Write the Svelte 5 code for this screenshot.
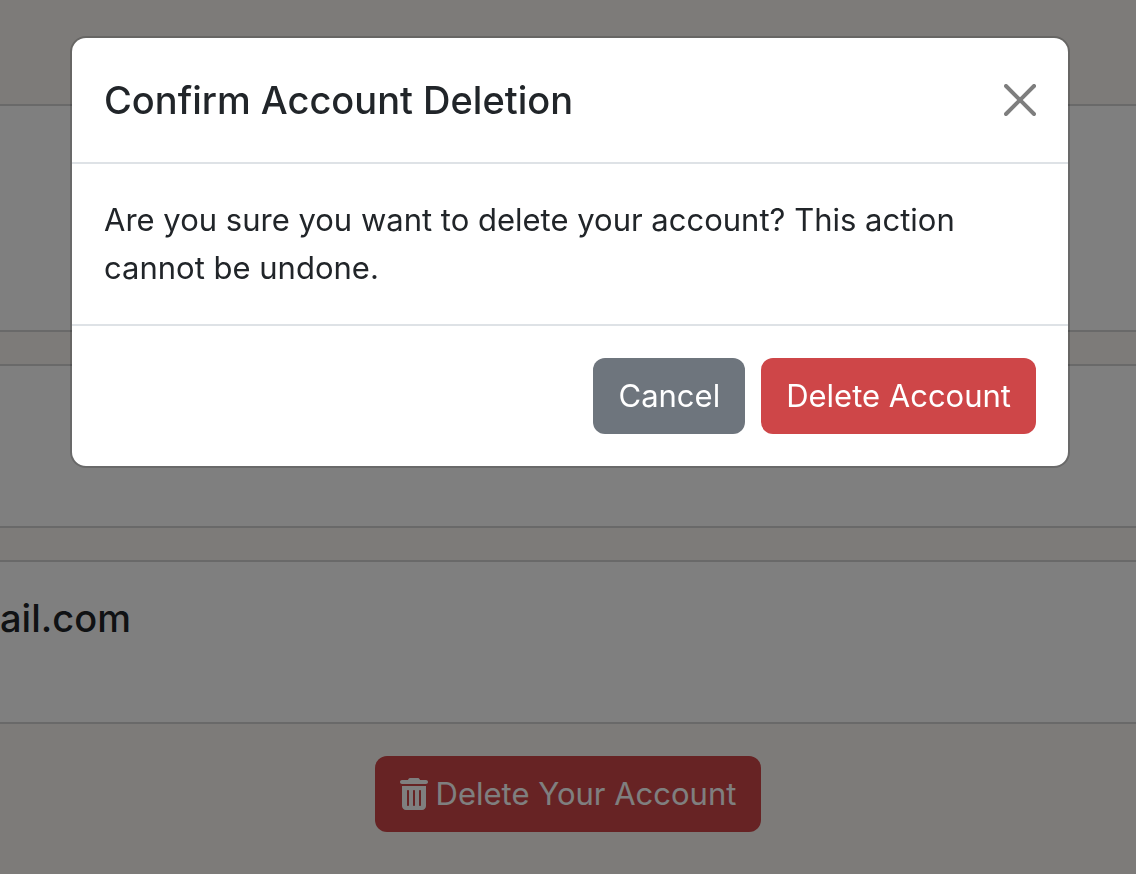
<script>
  let open = $state(true);
</script>

<div class="page">
  <header class="top"></header>
  <section class="card first"></section>
  <section class="card second"></section>
  <section class="card third"><h2>ail.com</h2></section>
  <button class="btn danger remove" type="button" onclick={() => (open = true)}>
    <svg viewBox="0 0 448 512" width="28" height="32" fill="currentColor" aria-hidden="true">
      <path d="M135.2 17.7L128 32H32C14.3 32 0 46.3 0 64S14.3 96 32 96H416c17.7 0 32-14.3 32-32s-14.3-32-32-32H320l-7.2-14.3C307.4 6.8 296.3 0 284.2 0H163.8c-12.1 0-23.2 6.8-28.6 17.7zM32 128V448c0 35.3 28.7 64 64 64H352c35.3 0 64-28.7 64-64V128H32zm96 64c8.8 0 16 7.2 16 16V432c0 8.8-7.2 16-16 16s-16-7.2-16-16V208c0-8.8 7.2-16 16-16zm96 0c8.8 0 16 7.2 16 16V432c0 8.8-7.2 16-16 16s-16-7.2-16-16V208c0-8.8 7.2-16 16-16zm96 0c8.8 0 16 7.2 16 16V432c0 8.8-7.2 16-16 16s-16-7.2-16-16V208c0-8.8 7.2-16 16-16z" />
    </svg>
    Delete Your Account
  </button>
</div>

{#if open}
  <div class="backdrop">
    <div class="modal" role="dialog" aria-modal="true" aria-labelledby="title">
      <div class="head">
        <h1 id="title">Confirm Account Deletion</h1>
        <button class="close" type="button" aria-label="Close" onclick={() => (open = false)}>
          <svg viewBox="0 0 16 16" width="32" height="32" aria-hidden="true">
            <path d="M.293.293a1 1 0 0 1 1.414 0L8 6.586 14.293.293a1 1 0 1 1 1.414 1.414L9.414 8l6.293 6.293a1 1 0 0 1-1.414 1.414L8 9.414l-6.293 6.293a1 1 0 0 1-1.414-1.414L6.586 8 .293 1.707a1 1 0 0 1 0-1.414z" />
          </svg>
        </button>
      </div>
      <p class="body">Are you sure you want to delete your account? This action cannot be undone.</p>
      <div class="foot">
        <button class="btn secondary" type="button" onclick={() => (open = false)}>Cancel</button>
        <button class="btn danger" type="button">Delete Account</button>
      </div>
    </div>
  </div>
{/if}

<style>
  :global(body) {
    background: #fbf7f3;
  }
  .page,
  .backdrop {
    font-family: Inter, "Liberation Sans", sans-serif;
    font-size: 31px;
    line-height: 48px;
    color: #212529;
  }
  .page {
    display: flex;
    flex-direction: column;
    min-height: 100vh;
  }
  .top {
    height: 104px;
  }
  .card {
    box-sizing: border-box;
    background: #fff;
    border: solid rgba(0, 0, 0, 0.175);
    border-width: 2px 0;
    padding: 32px 0;
    margin-bottom: 32px;
  }
  .first {
    min-height: 228px;
  }
  .second,
  .third {
    min-height: 164px;
  }
  h1,
  h2 {
    margin: 0;
    font-size: 38px;
    line-height: 60px;
    font-weight: 500;
  }
  h2 {
    line-height: 48px;
  }
  .btn {
    display: flex;
    align-items: center;
    gap: 8px;
    border: 0;
    border-radius: 12px;
    padding: 14px 25px;
    font: inherit;
    color: #fff;
    cursor: pointer;
  }
  .danger {
    background: #ce4648;
  }
  .secondary {
    background: #6e757d;
  }
  .remove {
    align-self: center;
  }
  .backdrop {
    position: fixed;
    inset: 0;
    background: rgba(0, 0, 0, 0.5);
    padding: 36px 66px 0 70px;
  }
  .modal {
    background: #fff;
    background-clip: padding-box;
    border: 2px solid rgba(0, 0, 0, 0.175);
    border-radius: 16px;
  }
  .head {
    display: flex;
    align-items: center;
    justify-content: space-between;
    padding: 32px;
    border-bottom: 2px solid #dee2e6;
  }
  .close {
    display: flex;
    border: 0;
    padding: 0;
    background: none;
    opacity: 0.5;
    cursor: pointer;
  }
  .body {
    margin: 0;
    padding: 32px;
  }
  .foot {
    display: flex;
    justify-content: flex-end;
    gap: 16px;
    padding: 32px;
    border-top: 2px solid #dee2e6;
  }
</style>
